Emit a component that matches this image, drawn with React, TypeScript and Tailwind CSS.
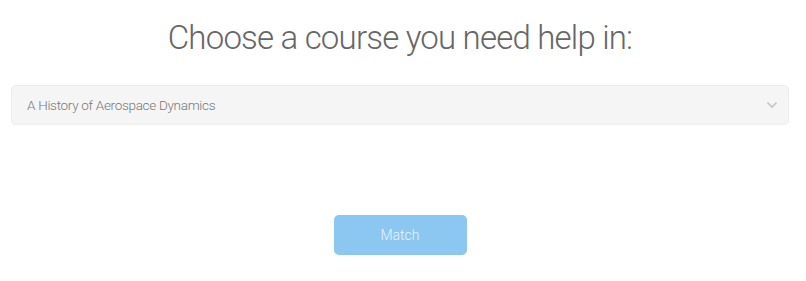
export default function App() {
  return (
    <div
      className="w-[800px] h-[281px] bg-white flex flex-col items-center pt-[14px]"
      style={{ fontFamily: "Roboto, 'Open Sans', sans-serif" }}
    >
      <h1 className="text-[33px] leading-[48px] font-light text-[#666] tracking-[-0.8px]">
        Choose a course you need help in:
      </h1>
      <div className="mt-[23px] w-[778px] h-[40px] rounded-[5px] bg-[#f5f5f5] border border-[#ececec] flex items-center justify-between pl-[15px] pr-[10px]">
        <span className="text-[13.5px] font-light text-[#777] tracking-[-0.3px]">A History of Aerospace Dynamics</span>
        <svg width="12" height="8" viewBox="0 0 12 8" fill="none">
          <path d="M1.5 1.5 6 6l4.5-4.5" stroke="#c4c4c4" strokeWidth="1.6" />
        </svg>
      </div>
      <button className="mt-[90px] w-[133px] h-[40px] rounded-[5px] bg-[#8cc7f1] text-[14px] font-light text-[#eaf4fc]">
        Match
      </button>
    </div>
  );
}
